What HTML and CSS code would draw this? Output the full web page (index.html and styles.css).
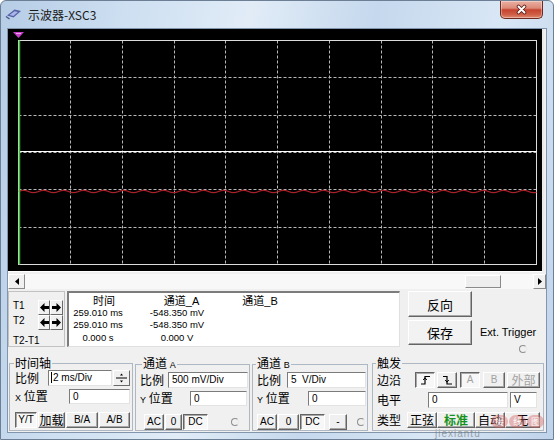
FILE: index.html
```html
<!DOCTYPE html>
<html lang="zh">
<head>
<meta charset="utf-8">
<title>示波器-XSC3</title>
<link rel="stylesheet" href="styles.css">
</head>
<body>
<div class="window">
  <div class="titlebar">
    <svg class="appicon" width="17" height="12" viewBox="0 0 17 12">
      <path d="M2 7.5L9.5 1.5L16 3L8.5 9.5Z" fill="#5561a6"/>
      <path d="M4.5 7L9.5 3.2L13 4L8.3 8Z" fill="#aab6ea"/>
      <path d="M1 8.5L4.5 11" stroke="#4b558f" stroke-width="1.4"/>
    </svg>
    <span class="title">示波器-XSC3</span>
    <div class="close">
      <svg width="13" height="11" viewBox="0 0 13 11">
        <path d="M3.5 2.5L9.5 8.5M9.5 2.5L3.5 8.5" stroke="#5a1f17" stroke-width="3.6" stroke-linecap="round"/>
        <path d="M3.5 2.5L9.5 8.5M9.5 2.5L3.5 8.5" stroke="#ffffff" stroke-width="1.9" stroke-linecap="round"/>
      </svg>
    </div>
  </div>

  <div class="client">
    <div class="scope">
      <svg class="screen" width="534" height="242" viewBox="0 0 534 242">
        <defs>
          <clipPath id="gridclip"><rect x="10.5" y="11.5" width="518" height="224"/></clipPath>
        </defs>
        <g fill="none" stroke="#b9b9b9" stroke-width="1" stroke-dasharray="3 2">
          <path d="M62.5 11.5V235.5M114.5 11.5V235.5M166.5 11.5V235.5M217.5 11.5V235.5M269.5 11.5V235.5M321.5 11.5V235.5M373.5 11.5V235.5M424.5 11.5V235.5M476.5 11.5V235.5"/>
          <path d="M10.5 48.5H528.5M10.5 86.5H528.5M10.5 123.5H528.5M10.5 160.5H528.5M10.5 198.5H528.5"/>
        </g>
        <rect x="10.5" y="11.5" width="518" height="224" fill="none" stroke="#dcdcdc"/>
        <path d="M11 122.5H528.5" stroke="#ffffff" stroke-width="1.2"/>
        <path clip-path="url(#gridclip)" fill="none" stroke="#a82028" stroke-width="1.2" d="M10.5 162.5q5 -2.4 10 0t10 0t10 0t10 0t10 0t10 0t10 0t10 0t10 0t10 0t10 0t10 0t10 0t10 0t10 0t10 0t10 0t10 0t10 0t10 0t10 0t10 0t10 0t10 0t10 0t10 0t10 0t10 0t10 0t10 0t10 0t10 0t10 0t10 0t10 0t10 0t10 0t10 0t10 0t10 0t10 0t10 0t10 0t10 0t10 0t10 0t10 0t10 0t10 0t10 0t10 0t10 0"/>
        <path d="M11.5 11.5V235.5" stroke="#30c030" stroke-width="1.5"/>
        <polygon points="5,3 16,3 10.5,9" fill="#c83fc8"/>
        <path d="M8 4.5H13" stroke="#f0a0f0" stroke-width="1"/>
      </svg>
    </div>

    <div class="hscroll">
      <div class="sbtn sbtn-l"><svg width="4" height="7" viewBox="0 0 4 7"><path d="M4 0V7L0 3.5Z" fill="#000"/></svg></div>
      <div class="track"><div class="thumb"></div></div>
      <div class="sbtn sbtn-r"><svg width="4" height="7" viewBox="0 0 4 7"><path d="M0 0V7L4 3.5Z" fill="#000"/></svg></div>
    </div>

    <div class="mid">
      <div class="tbox">
        <div class="trow">
          <span class="tl">T1</span>
          <div class="arr arr-l"><svg width="9" height="9" viewBox="0 0 9 9"><path d="M0 4.5L4.5 0V3H9V6H4.5V9Z" fill="#000"/></svg></div>
          <div class="arr arr-r"><svg width="9" height="9" viewBox="0 0 9 9"><path d="M9 4.5L4.5 0V3H0V6H4.5V9Z" fill="#000"/></svg></div>
        </div>
        <div class="trow">
          <span class="tl">T2</span>
          <div class="arr arr-l"><svg width="9" height="9" viewBox="0 0 9 9"><path d="M0 4.5L4.5 0V3H9V6H4.5V9Z" fill="#000"/></svg></div>
          <div class="arr arr-r"><svg width="9" height="9" viewBox="0 0 9 9"><path d="M9 4.5L4.5 0V3H0V6H4.5V9Z" fill="#000"/></svg></div>
        </div>
        <div class="tdiff">T2-T1</div>
      </div>

      <div class="data">
        <div class="dgrid">
          <span class="dh dh1">时间</span><span class="dh dh2">通道_A</span><span class="dh">通道_B</span>
          <span>259.010 ms</span><span>-548.350 mV</span><span></span>
          <span>259.010 ms</span><span>-548.350 mV</span><span></span>
          <span>0.000 s</span><span>0.000 V</span><span></span>
        </div>
      </div>

      <div class="actions">
        <div class="abtn abtn-1">反向</div>
        <div class="abtn">保存</div>
      </div>

      <div class="ext">
        <span class="ext-label">Ext. Trigger</span>
        <span class="radio ext-radio"></span>
      </div>
    </div>

    <div class="groups">
      <fieldset class="grp g-time">
        <legend>时间轴</legend>
        <div class="row r1">
          <span class="lbl w33">比例</span>
          <div class="inp w64"><span class="caret"></span>2 ms/Div</div>
          <div class="spin">
            <svg width="15" height="14" viewBox="0 0 15 14"><path d="M7.5 2.5L6 4.5H9Z M7.5 11.5L6 9.5H9Z" fill="#000"/><path d="M2 7H13" stroke="#000" stroke-width="1"/></svg>
          </div>
        </div>
        <div class="row r2">
          <span class="lbl w54"><span class="sm">X</span> 位置</span>
          <div class="inp w61">0</div>
        </div>
        <div class="row r3 gap1">
          <div class="btn on w22">Y/T</div>
          <div class="btn cj w27">加载</div>
          <div class="btn w32">B/A</div>
          <div class="btn w31">A/B</div>
        </div>
      </fieldset>

      <fieldset class="grp g-a">
        <legend>通道 <span class="sm">A</span></legend>
        <div class="row r1">
          <span class="lbl w28">比例</span>
          <div class="inp w80">500 mV/Div</div>
        </div>
        <div class="row r2">
          <span class="lbl w50"><span class="sm">Y</span> 位置</span>
          <div class="inp w57">0</div>
        </div>
        <div class="row r3 gap1 indent4">
          <div class="btn w20">AC</div>
          <div class="btn w17">0</div>
          <div class="btn on w25">DC</div>
          <span class="radio radio-a"></span>
        </div>
      </fieldset>

      <fieldset class="grp g-b">
        <legend>通道 <span class="sm">B</span></legend>
        <div class="row r1">
          <span class="lbl w30">比例</span>
          <div class="inp w79">5&nbsp; V/Div</div>
        </div>
        <div class="row r2">
          <span class="lbl w51"><span class="sm">Y</span> 位置</span>
          <div class="inp w58">0</div>
        </div>
        <div class="row r3 gap1">
          <div class="btn w20">AC</div>
          <div class="btn w21">0</div>
          <div class="btn on w25">DC</div>
          <div class="btn w18 ml3">-</div>
          <span class="radio radio-b"></span>
        </div>
      </fieldset>

      <fieldset class="grp g-trig">
        <legend>触发</legend>
        <div class="row t1">
          <span class="lbl w38">边沿</span>
          <div class="btn on w20"><svg width="11" height="10" viewBox="0 0 11 10"><path d="M1 9H5V1.5H10" fill="none" stroke="#000" stroke-width="1.2"/><path d="M3.2 5L5 2.8L6.8 5" fill="none" stroke="#000" stroke-width="1"/></svg></div>
          <div class="btn w20 ml2"><svg width="11" height="10" viewBox="0 0 11 10"><path d="M1 1.5H5V9H10" fill="none" stroke="#000" stroke-width="1.2"/><path d="M3.2 5L5 7.2L6.8 5" fill="none" stroke="#000" stroke-width="1"/></svg></div>
          <div class="btn on dis w20 ml3">A</div>
          <div class="btn dis w22 ml3">B</div>
          <div class="btn dis cj w33 ml2">外部</div>
        </div>
        <div class="row t2">
          <span class="lbl w51">电平</span>
          <div class="inp w80">0</div>
          <div class="inp w27 ml2">V</div>
        </div>
        <div class="row t3">
          <span class="lbl w30">类型</span>
          <div class="btn cj w30">正弦</div>
          <div class="btn cj w38 green">标准</div>
          <div class="btn cj w30">自动</div>
          <div class="btn cj w35">无</div>
        </div>
      </fieldset>
    </div>
  </div>

  <span class="wm-text">jiexiantu</span>
  <div class="wm-logo"><span class="wm-c">接</span><span class="wm-c">线</span><span class="wm-c">图</span></div>
</div>
</body>
</html>
```

FILE: styles.css
```css
* { box-sizing: border-box; margin: 0; padding: 0; }
html, body { width: 554px; height: 440px; overflow: hidden; }
body {
  background: #ffffff;
  font-family: "Liberation Sans", "Noto Sans CJK SC", sans-serif;
  color: #000;
}

.window {
  position: relative;
  width: 554px;
  height: 440px;
  border: 1px solid #6c7f94;
  border-radius: 6px 6px 0 0;
  background: linear-gradient(100deg, #b6cde6 0%, #cddff1 20%, #e1ecf7 40%, #c5d8ed 60%, #d9e7f5 80%, #bfd3ea 100%);
  padding: 0 6px 6px;
  display: flex;
  flex-direction: column;
}

/* title bar */
.titlebar {
  height: 27px;
  margin: 0 -6px;
  padding: 0 10px 0 4px;
  display: flex;
  align-items: center;
}
.appicon { display: block; margin-top: -1px; }
.title {
  margin-left: 6px;
  font-family: "Noto Sans CJK SC", "Liberation Sans", sans-serif;
  font-size: 12px;
  line-height: 14px;
  color: #1b1b1b;
}
.close {
  margin-left: auto;
  align-self: flex-start;
  width: 43px;
  height: 18px;
  border: 1px solid #6e2a20;
  border-top: 0;
  border-radius: 0 0 5px 5px;
  background: linear-gradient(#eab0a3 0%, #dc8a78 42%, #c5432f 52%, #cf5f47 80%, #e08a70 100%);
  box-shadow: inset 0 0 0 1px rgba(255, 255, 255, 0.35);
  display: flex;
  align-items: center;
  justify-content: center;
}
.close svg { display: block; }

/* client */
.client {
  flex: 1;
  min-height: 0;
  background: #f0f0f0;
  border: 1px solid #8196ac;
  display: flex;
  flex-direction: column;
}

.scope {
  width: 536px;
  height: 243px;
  background: #000;
  border-right: 2px solid #e9e9e9;
  border-bottom: 1px solid #ffffff;
}
.screen { display: block; }

/* scrollbar */
.hscroll {
  height: 18px;
  display: flex;
  align-items: flex-start;
  padding-top: 2px;
}
.sbtn {
  height: 15px;
  background: #f0f0f0;
  border: 1px solid;
  border-color: #ffffff #8a8a8a #8a8a8a #ffffff;
  display: flex;
  align-items: center;
  justify-content: center;
}
.sbtn svg { display: block; }
.sbtn-l { width: 17px; }
.sbtn-r { width: 13px; }
.track {
  flex: 1;
  height: 15px;
  background: #f8f8f8;
  padding-top: 1px;
}
.thumb {
  margin-left: 440px;
  width: 36px;
  height: 13px;
  background: #eeeeee;
  border: 1px solid;
  border-color: #ffffff #8a8a8a #8a8a8a #ffffff;
}

/* middle panel */
.mid {
  display: flex;
  height: 56px;
  margin-top: 1px;
}
.tbox {
  width: 57px;
  border: 1px solid #c2c2c2;
  padding: 8px 0 0 4px;
  font-size: 10px;
}
.trow {
  display: flex;
  height: 15px;
}
.tl {
  width: 25px;
  line-height: 11px;
}
.arr {
  height: 15px;
  flex: none;
  background: #f0f0f0;
  border: 1px solid;
  border-color: #ffffff #6a6a6a #6a6a6a #ffffff;
  display: flex;
  align-items: center;
  justify-content: center;
}
.arr svg { display: block; flex: none; }
.arr-l { width: 12px; }
.arr-r { width: 13px; }
.tdiff {
  margin-top: 5px;
  line-height: 12px;
}

.data {
  width: 333px;
  margin-left: 2px;
  background: #ffffff;
  border-style: solid;
  border-width: 2px 1px 1px 2px;
  border-color: #7c7c7c #e0e0e0 #e0e0e0 #7c7c7c;
  padding-top: 2px;
}
.dgrid {
  display: grid;
  grid-template-columns: 58px 100px 66px;
  grid-template-rows: 12px 11px 13px 14px;
  align-items: center;
  text-align: center;
  font-size: 9.5px;
  line-height: 1;
}
.dh { font-size: 11px; }
.dh1 { padding-left: 12px; }
.dh2 { padding-left: 9px; }

.actions {
  width: 64px;
  margin-left: 8px;
  display: flex;
  flex-direction: column;
  gap: 3px;
}
.abtn {
  height: 25px;
  background: #f2f2f2;
  border: 1px solid;
  border-color: #ffffff #646464 #646464 #ffffff;
  box-shadow: inset -1px -1px #a8a8a8;
  font-family: "Noto Sans CJK SC", sans-serif;
  font-size: 13px;
  line-height: 1;
  display: flex;
  align-items: center;
  justify-content: center;
}
.abtn-1 { height: 26px; }

.ext {
  flex: 1;
  padding: 35px 0 0 8px;
  display: flex;
  flex-direction: column;
  align-items: flex-start;
}
.ext-label {
  font-size: 11px;
  line-height: 12px;
}
.radio {
  display: block;
  flex: none;
  width: 8px;
  height: 8px;
  border-radius: 50%;
  border: 1px solid #8e8e8e;
  border-right-color: #e8e8e8;
  background: #f0f0f0;
}
.ext-radio { margin: 7px 0 0 39px; }

/* bottom groups */
.groups {
  display: flex;
  height: 75px;
  margin-top: 9px;
  padding-left: 1px;
}
.grp {
  height: 75px;
  min-width: 0;
  border: 1px solid #aeb8c2;
  padding: 0 0 2px 4px;
}
.grp legend {
  font-family: "Noto Sans CJK SC", sans-serif;
  font-size: 12px;
  line-height: 14px;
  padding: 0 1px;
  margin-left: -1px;
}
.g-time { width: 124px; padding-left: 5px; }
.g-a { width: 115px; margin-left: 2px; }
.g-a legend { margin-left: 2px; }
.g-b { width: 116px; margin-left: 2px; }
.g-trig { width: 172px; margin-left: 4px; }

.row { display: flex; align-items: center; }
.r1 { height: 16px; }
.r2 { height: 15px; margin-top: 3px; }
.r3 { height: 16px; margin-top: 8px; }
.t1 { height: 16px; margin-top: 2px; }
.t2 { height: 16px; margin-top: 4px; }
.t3 { height: 16px; margin-top: 4px; }
.gap1 { gap: 1px; }
.indent4 { padding-left: 4px; }

.lbl {
  font-family: "Noto Sans CJK SC", sans-serif;
  font-size: 12px;
  line-height: 14px;
  white-space: nowrap;
  flex: none;
}
.sm {
  font-family: "Liberation Sans", sans-serif;
  font-size: 9px;
}

.inp {
  height: 16px;
  flex: none;
  background: #ffffff;
  border: 1px solid;
  border-color: #7b7b7b #e3e3e3 #e3e3e3 #7b7b7b;
  font-size: 10px;
  line-height: 14px;
  padding-left: 3px;
  white-space: nowrap;
}
.r2 .inp { height: 15px; line-height: 13px; }
.caret {
  display: inline-block;
  width: 1px;
  height: 11px;
  background: #000;
  vertical-align: -2px;
  margin-right: 1px;
  margin-left: -1px;
}
.spin {
  width: 17px;
  height: 16px;
  margin-left: 1px;
  background: #f0f0f0;
  border: 1px solid;
  border-color: #ffffff #6a6a6a #6a6a6a #ffffff;
  display: flex;
  align-items: center;
  justify-content: center;
}
.spin svg { display: block; }

.btn {
  height: 16px;
  flex: none;
  background: #f0f0f0;
  border: 1px solid;
  border-color: #ffffff #646464 #646464 #ffffff;
  box-shadow: inset -1px -1px #a8a8a8;
  font-size: 10px;
  line-height: 1;
  display: flex;
  align-items: center;
  justify-content: center;
  white-space: nowrap;
}
.btn svg { display: block; }
.btn.on {
  border-color: #646464 #ffffff #ffffff #646464;
  box-shadow: inset 1px 1px #a8a8a8;
  background: #f7f7f7;
}
.btn.dis { color: #a2a2a2; }
.btn.cj {
  font-family: "Noto Sans CJK SC", sans-serif;
  font-size: 12px;
}
.btn.green { color: #17921d; font-weight: bold; }

.radio-a { margin-left: 22px; }
.radio-b { margin-left: 9px; }

.w17 { width: 17px; } .w18 { width: 18px; } .w20 { width: 20px; } .w21 { width: 21px; }
.w22 { width: 22px; } .w25 { width: 25px; } .w27 { width: 27px; } .w28 { width: 28px; }
.w30 { width: 30px; } .w31 { width: 31px; } .w32 { width: 32px; } .w33 { width: 33px; }
.w35 { width: 35px; } .w38 { width: 38px; } .w50 { width: 50px; } .w51 { width: 51px; }
.w54 { width: 54px; } .w57 { width: 57px; } .w58 { width: 58px; } .w61 { width: 61px; }
.w64 { width: 64px; } .w79 { width: 79px; } .w80 { width: 80px; }
.ml2 { margin-left: 2px; } .ml3 { margin-left: 3px; }

/* watermark overlay */
.wm-text {
  position: absolute;
  left: 434px;
  top: 427px;
  font-size: 10px;
  line-height: 11px;
  letter-spacing: 1px;
  color: rgba(110, 110, 110, 0.6);
}
.wm-logo {
  position: absolute;
  left: 490px;
  top: 414px;
  display: flex;
  gap: 1px;
  opacity: 0.8;
}
.wm-c {
  width: 17px;
  height: 13px;
  border-radius: 7px;
  background: rgba(214, 92, 92, 0.5);
  color: #ffffff;
  font-family: "Noto Sans CJK SC", sans-serif;
  font-size: 9px;
  line-height: 13px;
  text-align: center;
}
```
